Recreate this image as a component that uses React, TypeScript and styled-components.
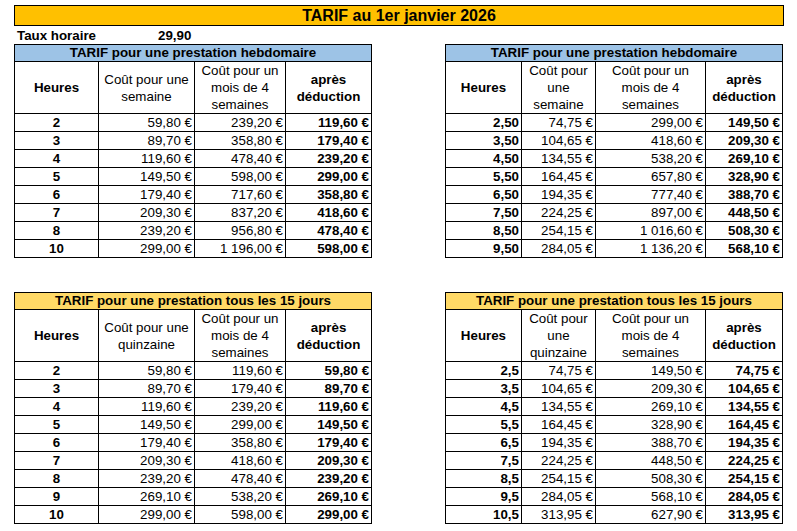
import React from "react";
import styled, { createGlobalStyle } from "styled-components";

const RATE_CENTS = 2990;

const GlobalStyle = createGlobalStyle`
  html, body {
    margin: 0;
    padding: 0;
    background: #ffffff;
  }
  body {
    font-family: "Liberation Sans", Arial, sans-serif;
    color: #000000;
  }
`;

const Page = styled.div`
  width: 770px;
  padding: 5px 0 0 14px;
  display: flex;
  flex-direction: column;
`;

const TitleBar = styled.div`
  height: 19px;
  background: #ffc000;
  border: 1px solid #000;
  font-size: 16px;
  font-weight: 700;
  line-height: 19px;
  text-align: center;
`;

const RateRow = styled.div`
  display: flex;
  height: 18px;
  align-items: center;
  font-size: 13.33px;
  font-weight: 700;
  padding-left: 3px;

  .label {
    width: 141px;
  }
`;

const TablesRow = styled.div<{ $top?: number }>`
  display: flex;
  justify-content: space-between;
  width: 769px;
  margin-top: ${(p) => p.$top ?? 0}px;
`;

const PriceTable = styled.table<{ $width: number }>`
  width: ${(p) => p.$width}px;
  border-collapse: collapse;
  table-layout: fixed;
  font-size: 13.33px;

  td,
  th {
    border: 1px solid #000;
    padding: 0 2px;
    overflow: hidden;
    white-space: nowrap;
  }
`;

const TitleCell = styled.th<{ $bg: string }>`
  background: ${(p) => p.$bg};
  height: 16px;
  line-height: 16px;
  font-weight: 700;
  text-align: center;
`;

const HeadCell = styled.th<{ $bold?: boolean }>`
  height: 50px;
  line-height: 17px;
  font-weight: ${(p) => (p.$bold ? 700 : 400)};
  text-align: center;
  vertical-align: middle;
`;

const HoursCell = styled.td<{ $align: "center" | "right" }>`
  height: 17px;
  line-height: 17px;
  font-weight: 700;
  text-align: ${(p) => p.$align};
`;

const AmountCell = styled.td<{ $bold?: boolean }>`
  height: 17px;
  line-height: 17px;
  text-align: right;
  font-weight: ${(p) => (p.$bold ? 700 : 400)};
`;

const formatEuro = (cents: number): string => {
  const euros = Math.floor(cents / 100);
  const rest = String(cents % 100).padStart(2, "0");
  const grouped = String(euros).replace(/\B(?=(\d{3})+(?!\d))/g, " ");
  return `${grouped},${rest} €`;
};

type Row = { hours: string; first: number; month: number; after: number };

const buildRows = (
  tenths: number[],
  decimals: number,
  monthFactor: number,
  afterFactor: number
): Row[] =>
  tenths.map((t) => {
    const first = t * (RATE_CENTS / 10);
    return {
      hours: (t / 10).toFixed(t % 10 === 0 && decimals === 0 ? 0 : decimals).replace(".", ","),
      first,
      month: first * monthFactor,
      after: first * afterFactor,
    };
  });

type TableProps = {
  title: string;
  color: string;
  width: number;
  cols: number[];
  firstHead: string[];
  hoursAlign: "center" | "right";
  rows: Row[];
};

const Tarif: React.FC<TableProps> = ({ title, color, width, cols, firstHead, hoursAlign, rows }) => (
  <PriceTable $width={width}>
    <colgroup>
      {cols.map((w, i) => (
        <col key={i} style={{ width: w }} />
      ))}
    </colgroup>
    <thead>
      <tr>
        <TitleCell colSpan={4} $bg={color}>
          {title}
        </TitleCell>
      </tr>
      <tr>
        <HeadCell $bold>Heures</HeadCell>
        <HeadCell>
          {firstHead.map((l, i) => (
            <div key={i}>{l}</div>
          ))}
        </HeadCell>
        <HeadCell>
          <div>Coût pour un</div>
          <div>mois de 4</div>
          <div>semaines</div>
        </HeadCell>
        <HeadCell $bold>
          <div>après</div>
          <div>déduction</div>
        </HeadCell>
      </tr>
    </thead>
    <tbody>
      {rows.map((r) => (
        <tr key={r.hours}>
          <HoursCell $align={hoursAlign}>{r.hours}</HoursCell>
          <AmountCell>{formatEuro(r.first)}</AmountCell>
          <AmountCell>{formatEuro(r.month)}</AmountCell>
          <AmountCell $bold>{formatEuro(r.after)}</AmountCell>
        </tr>
      ))}
    </tbody>
  </PriceTable>
);

const LEFT_COLS = [84, 96, 91, 86];
const RIGHT_COLS = [76, 74, 110, 77];

export default function App() {
  return (
    <>
      <GlobalStyle />
      <Page>
        <TitleBar>TARIF au 1er janvier 2026</TitleBar>
        <RateRow>
          <span className="label">Taux horaire</span>
          <span>29,90</span>
        </RateRow>
        <TablesRow>
          <Tarif
            title="TARIF pour une prestation hebdomaire"
            color="#9dc3e6"
            width={357}
            cols={LEFT_COLS}
            firstHead={["Coût pour une", "semaine"]}
            hoursAlign="center"
            rows={buildRows([20, 30, 40, 50, 60, 70, 80, 100], 0, 4, 2)}
          />
          <Tarif
            title="TARIF pour une prestation hebdomaire"
            color="#9dc3e6"
            width={337}
            cols={RIGHT_COLS}
            firstHead={["Coût pour", "une", "semaine"]}
            hoursAlign="right"
            rows={buildRows([25, 35, 45, 55, 65, 75, 85, 95], 2, 4, 2)}
          />
        </TablesRow>
        <TablesRow $top={34}>
          <Tarif
            title="TARIF pour une prestation tous les 15 jours"
            color="#ffd966"
            width={357}
            cols={LEFT_COLS}
            firstHead={["Coût pour une", "quinzaine"]}
            hoursAlign="center"
            rows={buildRows([20, 30, 40, 50, 60, 70, 80, 90, 100], 0, 2, 1)}
          />
          <Tarif
            title="TARIF pour une prestation tous les 15 jours"
            color="#ffd966"
            width={337}
            cols={RIGHT_COLS}
            firstHead={["Coût pour", "une", "quinzaine"]}
            hoursAlign="right"
            rows={buildRows([25, 35, 45, 55, 65, 75, 85, 95, 105], 1, 2, 1)}
          />
        </TablesRow>
      </Page>
    </>
  );
}
